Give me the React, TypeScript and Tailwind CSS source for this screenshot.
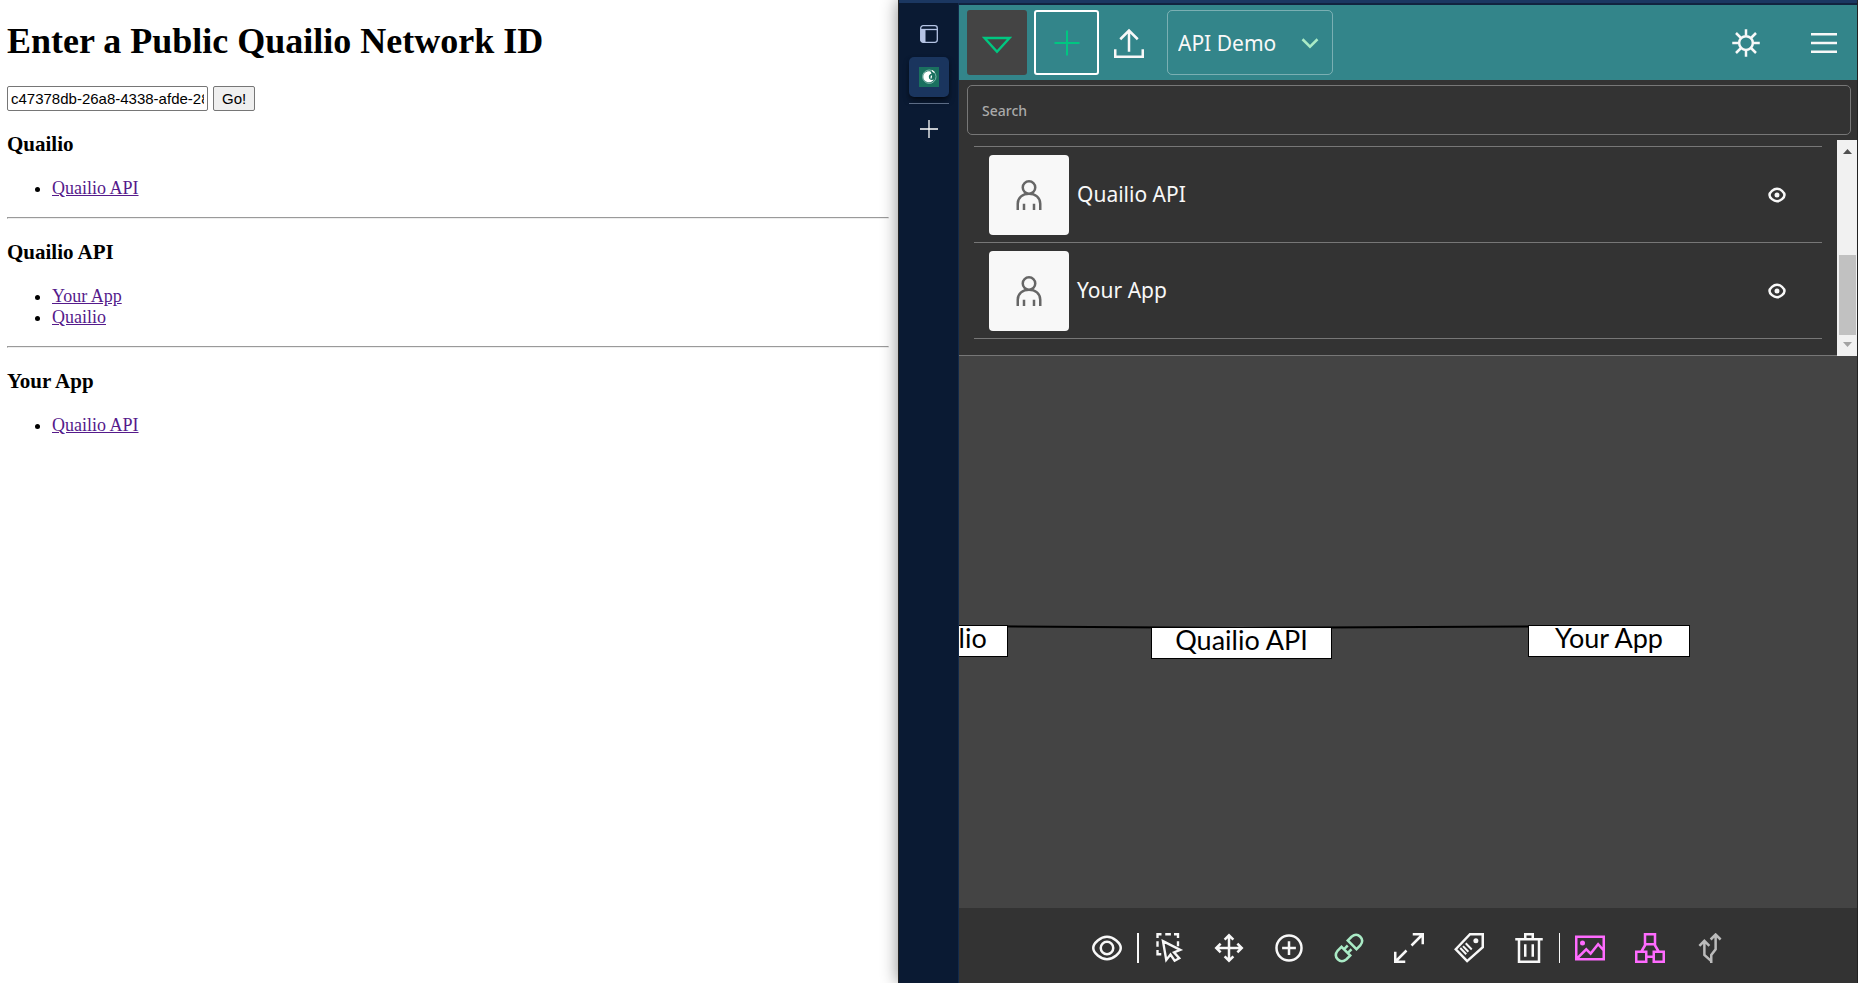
import type { ReactNode } from "react";

type IconProps = { children: ReactNode; className?: string; size?: string };

function Icon({ children, className = "text-[#f8f8f8]", size = "size-[30px]" }: IconProps) {
  return (
    <svg viewBox="0 0 24 24" fill="none" stroke="currentColor" strokeWidth="2" aria-hidden="true" className={`${size} shrink-0 ${className}`}>
      {children}
    </svg>
  );
}

const networks = [
  { title: "Quailio", links: ["Quailio API"] },
  { title: "Quailio API", links: ["Your App", "Quailio"] },
  { title: "Your App", links: ["Quailio API"] },
];

function PublicPage() {
  return (
    <main className="min-w-0 flex-1 bg-white pt-[21px] pr-[9px] pl-[7px] font-['Liberation_Serif',serif] text-base leading-[22px] text-black">
      <h1 className="text-[36px] leading-[41px] font-bold">Enter a Public Quailio Network ID</h1>
      <form className="mt-6 flex gap-[5px] font-['Liberation_Sans',sans-serif] text-[15px] leading-[18px]">
        <input
          aria-label="Network ID"
          defaultValue="c47378db-26a8-4338-afde-28f1c0a4be71"
          className="h-[25px] w-[201px] rounded-[2px] border border-[#767676] bg-white px-[3px]"
        />
        <button type="button" className="h-[25px] rounded-[2px] border border-[#767676] bg-[#efefef] px-2">Go!</button>
      </form>
      {networks.map((network, i) => (
        <section key={network.title}>
          {i > 0 && <hr className="mt-[18px] h-0.5 border border-[#9a9a9a] border-r-[#eee] border-b-[#eee]" />}
          <h3 className="mt-[21px] text-[21px] leading-[24px] font-bold">{network.title}</h3>
          <ul className="mt-[22px] list-disc pl-[45px] text-[18px] leading-[21px] marker:text-black">
            {network.links.map((link) => (
              <li key={link}>
                <a href="#network" className="text-[#551a8b] underline">{link}</a>
              </li>
            ))}
          </ul>
        </section>
      ))}
    </main>
  );
}

function Sidebar() {
  return (
    <nav aria-label="Window tabs" className="flex w-[60px] shrink-0 flex-col items-center border-r border-[#122a4b] bg-[#0a1a33] pt-[22px]">
      <button type="button" aria-label="Tab layout">
        <svg viewBox="0 0 18 18" aria-hidden="true" className="size-[18px] text-[#b5c4e4]" fill="none" stroke="currentColor">
          <rect x="0.7" y="0.7" width="16.6" height="16.6" rx="2.5" strokeWidth="1.3" />
          <path d="M1 4.5h16" strokeWidth="1.3" />
          <path d="M1 5h4v12H2.5L1 15.500z" fill="currentColor" />
        </svg>
      </button>
      <button type="button" aria-label="Quailio tab" className="mt-[14px] flex size-10 items-center justify-center rounded-[5px] bg-[#1a355e] shadow-md shadow-black/50">
        <svg viewBox="0 0 20 20" aria-hidden="true" className="size-5">
          <path fill="#1a705f" d="M0 0h20v20H0z" />
          <circle cx="10.300" cy="9.700" r="6.700" fill="none" stroke="#9cc7be" strokeWidth="0.800" />
          <path fill="#fff" d="M11.500 4.500C7.500 3.500 4 6.500 4.300 10.200c.3 4 4.500 5.800 7.500 4.800 1.500-.5 2.500-1.500 3-2.500-2 1-4.200.3-4.800-1.500-.6-2 .4-4 2.500-4.500z" />
          <circle cx="12.500" cy="10" r="2.300" fill="#1a705f" />
          <path stroke="#fff" strokeWidth="1.300" fill="none" d="M13 3.500l2.500 2M12.500 8.500l-.5 3" />
        </svg>
      </button>
      <div className="mt-1.5 h-px w-10 bg-[#5c6c85]" />
      <button type="button" aria-label="New tab" className="mt-4">
        <svg viewBox="0 0 18 18" aria-hidden="true" className="size-[18px]" stroke="#fff" strokeWidth="1.300">
          <path d="M9 0v18M0 9h18" />
        </svg>
      </button>
    </nav>
  );
}

function Header() {
  return (
    <header className="flex h-[75px] items-center bg-[#33858a] pr-2 pl-2">
      <button type="button" aria-label="Collapse list" className="flex h-[65px] w-[60px] items-center justify-center rounded-[3px] bg-[#444]">
        <Icon className="text-[#00c781]"><path d="M2 8h20L12 19z" /></Icon>
      </button>
      <button type="button" aria-label="Add person" className="ml-[7px] flex size-[65px] items-center justify-center rounded-[3px] border-2 border-white">
        <Icon className="text-[#00c781]"><path d="M12 2v20M2 12h20" strokeWidth="1.600" /></Icon>
      </button>
      <button type="button" aria-label="Upload" className="flex h-[65px] w-[60px] items-center justify-center">
        <Icon><path d="M1 17v6h22v-6M12 19V2M5 9l7-7 7 7" /></Icon>
      </button>
      <div className="relative ml-2 h-[65px] w-[166px]">
        <select aria-label="Network" className="size-full appearance-none rounded-[5px] border border-white/35 bg-transparent pt-0.5 pl-[10px] text-[21px] text-[#f8f8f8]">
          <option>API Demo</option>
        </select>
        <span className="pointer-events-none absolute inset-y-0 right-[8px] flex items-center">
          <Icon className="text-[#aaebc6]"><path d="M18 9l-6 6-6-6" /></Icon>
        </span>
      </div>
      <div className="ml-auto flex">
        <button type="button" aria-label="Toggle theme" className="flex h-[65px] w-[78px] items-center justify-center">
          <Icon>
            <circle cx="12" cy="12" r="5.500" />
            <path d="M12 1v5M12 18v5M1 12h5M18 12h5M4 4l4 4M16 16l4 4M4 20l4-4M16 8l4-4" />
          </Icon>
        </button>
        <button type="button" aria-label="Menu" className="flex h-[65px] w-16 items-center justify-end pr-2.5">
          <Icon><path d="M1.600 5h20.800M1.600 12h20.800M1.600 19h20.800" /></Icon>
        </button>
      </div>
    </header>
  );
}

function PersonRow({ name }: { name: string }) {
  return (
    <li className="flex h-24 items-center border-b border-[#777] pr-[30px] pl-[15px]">
      <span className="flex size-20 items-center justify-center rounded-[4px] bg-[#f8f8f8]">
        <Icon className="text-[#666]">
          <path d="M8 24v-5m8 5v-5M3 24v-5c0-4.970 4.030-8 9-8s9 3.030 9 8v5M12 11a5 5 0 1 0 0-10 5 5 0 0 0 0 10z" />
        </Icon>
      </span>
      <span className="ml-2 text-[21px] text-[#f8f8f8]">{name}</span>
      <button type="button" aria-label={`Show ${name}`} className="ml-auto">
        <Icon>
          <path d="M12 17c-2.727 0-6-2.778-6-5s3.273-5 6-5 6 2.778 6 5-3.273 5-6 5z" />
          <circle cx="12" cy="12" r="2" fill="currentColor" stroke="none" />
        </Icon>
      </button>
    </li>
  );
}

function PeopleList() {
  return (
    <section className="bg-[#333]">
      <div className="py-[5px] pr-1.5 pl-2">
        <input
          aria-label="Search"
          placeholder="Search"
          className="block h-[50px] w-full rounded-[5px] border border-[#777] bg-transparent px-[14px] text-[14px] font-medium text-white placeholder:text-[#aaa]"
        />
      </div>
      <div className="flex h-[216px]">
        <div className="min-w-0 flex-1 border-b border-[#777] pt-1.5 pr-[15px] pl-[15px]">
          <ul className="border-t border-[#777]">
            <PersonRow name="Quailio API" />
            <PersonRow name="Your App" />
          </ul>
        </div>
        <div className="flex w-5 flex-col items-center bg-[#f1f1f1]">
          <svg viewBox="0 0 20 20" aria-hidden="true" className="size-5" fill="#505050"><path d="M6 14h9l-4.500-5z" /></svg>
          <div className="mt-[95px] h-20 w-[17px] bg-[#c1c1c1]" />
          <svg viewBox="0 0 20 20" aria-hidden="true" className="size-5" fill="#a3a3a3"><path d="M6 7h9l-4.500 5z" /></svg>
        </div>
      </div>
    </section>
  );
}

function Diagram() {
  const node = "absolute flex h-8 justify-center border border-black bg-white text-[27px] leading-[24px] whitespace-nowrap text-black";
  return (
    <section aria-label="Network diagram" className="relative min-h-0 flex-1 overflow-hidden bg-[#444] font-['Lato',sans-serif]">
      <svg aria-hidden="true" className="absolute top-0 left-0 size-full" stroke="#000" strokeWidth="2" fill="none">
        <path d="M0 270L282 272L650 270" />
      </svg>
      <div className={`${node} top-[269px] -left-[78px] w-[127px]`}>Quailio</div>
      <div className={`${node} top-[271px] left-[192px] w-[181px]`}>Quailio API</div>
      <div className={`${node} top-[269px] left-[569px] w-[162px]`}>Your App</div>
    </section>
  );
}

const tools: { label: string; color?: string; before?: string; icon: ReactNode }[] = [
  { label: "View", icon: <><path d="M12 21c-5 0-11-5-11-9s6-9 11-9 11 5 11 9-6 9-11 9z" /><circle cx="12" cy="12" r="5" /></> },
  {
    label: "Select",
    before: "w-0.5",
    icon: <path strokeWidth="1.900" d="M2.800 4V1H6M9 1h4.500M16 1h3.200V4M19.200 6.500v4M2.800 6.500v4.500M2.800 13.500V17h3M7.200 6.500L21 13.500L16 15.500L20.200 20.200L16.500 22.200L13.200 17.200L9.800 21.500z" />,
  },
  { label: "Move", icon: <path d="M12 2v20M2 12h20M8.500 5.300L12 1.800l3.500 3.500M8.500 18.700l3.500 3.500 3.500-3.500M5.300 8.500L1.800 12l3.500 3.500M18.700 8.500l3.500 3.500-3.500 3.500" /> },
  { label: "Add", icon: <><circle cx="12" cy="12" r="10" /><path d="M12 6.500v11M6.500 12h11" /></> },
  {
    label: "Connect",
    color: "text-[#aaebc6]",
    icon: <path d="M10 21c-2.500 2-5 2-7 0s-2-4.500 0-7l3-3 7 7-3 3zM14 3c2.500-2 5-2 7 0s2 4.500 0 7l-3 3-7-7 3-3zM11 10l-2.500 2.500M14 13l-2.500 2.500" />,
  },
  { label: "Expand", icon: <path d="M10 14l-8 8M1 15v8h8M22 2l-8 8M15 1h8v8" /> },
  {
    label: "Tag",
    icon: <><path d="M1.400 13L12.800 1H23v10.400L10.500 22.500z" /><circle cx="17.500" cy="6.200" r="2" fill="currentColor" stroke="none" /><path strokeWidth="1.600" d="M5 12l4.800 5M7.200 10.500l4.300 4.500M9.400 8.200l4.800 5" /></>,
  },
  { label: "Delete", icon: <path d="M4 5v18h16V5M1 5h22M9 5V1h6v4M9 9v10M15 9v10" /> },
  {
    label: "Images",
    color: "text-[#ff6bff]",
    before: "w-px",
    icon: <><path d="M1 3h22v18H1zM1 21l8-8 3.500 3.500L18.500 9l4.500 5" /><circle cx="6" cy="8" r="2" fill="currentColor" stroke="none" /></>,
  },
  { label: "Cluster", color: "text-[#ff6bff]", icon: <path d="M8 1h8v8H8zM1 15h8v8H1zM15 15h8v8h-8zM9 19h6M8.500 9L5 15M15.500 9L19 15" /> },
  { label: "Directions", color: "text-[#bbb]", icon: <path d="M13 24v-6.500l3.500-4.500V2M12.500 5.200l4-4 4 4M13 22.500L7.500 17.500V7M3.500 10.300l4-4 4 4" /> },
];

function Toolbar() {
  return (
    <footer className="flex h-[75px] shrink-0 items-center justify-center bg-[#333] pt-1">
      {tools.map((tool) => (
        <div key={tool.label} className="flex items-center">
          {tool.before && <span className={`h-[30px] bg-[#f8f8f8] ${tool.before}`} />}
          <button type="button" aria-label={tool.label} className="flex h-[60px] w-[60px] items-center justify-center">
            <Icon className={tool.color}>{tool.icon}</Icon>
          </button>
        </div>
      ))}
    </footer>
  );
}

export default function App() {
  return (
    <div className="flex h-screen overflow-hidden bg-white">
      <PublicPage />
      <div className="flex w-[960px] max-w-[60%] shrink-0 flex-col border-r border-l border-[#222] bg-[#12233f] font-['Noto_Sans',sans-serif] shadow-[0_0_16px_rgba(0,0,0,0.45)]">
        <div className="h-[3px] shrink-0 bg-[#1b3761]" />
        <div className="flex min-h-0 flex-1">
          <Sidebar />
          <div className="flex min-w-0 flex-1 flex-col pt-0.5">
            <Header />
            <PeopleList />
            <Diagram />
            <Toolbar />
          </div>
        </div>
      </div>
    </div>
  );
}
